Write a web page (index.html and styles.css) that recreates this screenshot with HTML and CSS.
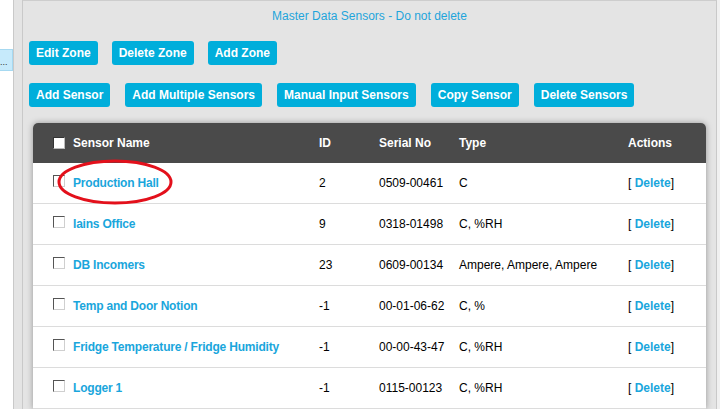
FILE: index.html
```html
<!DOCTYPE html>
<html lang="en">
<head>
    <meta charset="UTF-8">
    <meta name="viewport" content="width=device-width, initial-scale=1.0">
    <title>Master Data Sensors</title>
    <link rel="stylesheet" href="styles.css">
</head>
<body>

<div class="page">
    <aside class="sidebar">
        <div class="zone-item selected">...</div>
    </aside>
    <div class="gutter"></div>

    <main class="content">
        <h2 class="zone-title">Master Data Sensors - Do not delete</h2>

        <div class="button-row">
            <a href="#" class="btn">Edit Zone</a>
            <a href="#" class="btn">Delete Zone</a>
            <a href="#" class="btn">Add Zone</a>
        </div>
        <div class="button-row row-sensors">
            <a href="#" class="btn">Add Sensor</a>
            <a href="#" class="btn">Add Multiple Sensors</a>
            <a href="#" class="btn">Manual Input Sensors</a>
            <a href="#" class="btn">Copy Sensor</a>
            <a href="#" class="btn">Delete Sensors</a>
        </div>

        <div class="table-wrap">
            <table class="sensor-table">
                <colgroup>
                    <col class="col-name">
                    <col class="col-id">
                    <col class="col-serial">
                    <col class="col-type">
                    <col class="col-actions">
                </colgroup>
                <thead>
                    <tr>
                        <th><div class="name-cell"><span class="check check-head"></span>Sensor Name</div></th>
                        <th>ID</th>
                        <th>Serial No</th>
                        <th>Type</th>
                        <th>Actions</th>
                    </tr>
                </thead>
                <tbody id="sensor-rows"></tbody>
            </table>

            <!-- red annotation drawn over the first sensor -->
            <svg class="mark" width="118" height="48" viewBox="0 0 118 48">
                <ellipse cx="58" cy="23" rx="56" ry="21" fill="none" stroke="#e3101b" stroke-width="3"/>
            </svg>
        </div>
    </main>
</div>

<script>
    const sensors = [
        { name: 'Production Hall', id: 2, serial: '0509-00461', type: 'C' },
        { name: 'Iains Office', id: 9, serial: '0318-01498', type: 'C, %RH' },
        { name: 'DB Incomers', id: 23, serial: '0609-00134', type: 'Ampere, Ampere, Ampere' },
        { name: 'Temp and Door Notion', id: -1, serial: '00-01-06-62', type: 'C, %' },
        { name: 'Fridge Temperature / Fridge Humidity', id: -1, serial: '00-00-43-47', type: 'C, %RH' },
        { name: 'Logger 1', id: -1, serial: '0115-00123', type: 'C, %RH' }
    ];

    const tbody = document.getElementById('sensor-rows');

    sensors.forEach(s => {
        const tr = document.createElement('tr');
        tr.innerHTML = `
            <td><div class="name-cell"><span class="check"></span><a href="#" class="sensor-link">${s.name}</a></div></td>
            <td>${s.id}</td>
            <td>${s.serial}</td>
            <td>${s.type}</td>
            <td>[ <a href="#" class="delete-link">Delete</a>]</td>
        `;
        tbody.appendChild(tr);
    });
</script>

</body>
</html>
```

FILE: styles.css
```css
html, body {
    margin: 0;
    padding: 0;
    height: 409px;
    overflow: hidden;
}
body {
    font-family: "Liberation Sans", Arial, sans-serif;
    font-size: 12px;
    color: #000;
    background: #f0f0f0;
}
.page {
    display: flex;
    height: 409px;
    width: 717px;
}
.sidebar {
    width: 13px;
    background: #fff;
    border-right: 1px solid #c9c9c9;
    padding-top: 49px;
    overflow: hidden;
}
.zone-item {
    height: 20px;
    line-height: 24px;
    font-size: 9px;
    color: #333;
    white-space: nowrap;
    overflow: hidden;
}
.zone-item.selected {
    background: #c6eafb;
    border-top: 1px solid #a6d9f1;
    border-bottom: 1px solid #a6d9f1;
    border-right: 1px solid #a6d9f1;
}
.gutter {
    width: 8px;
    background: #e4e4e4;
    border-right: 1px solid #c9c9c9;
}
.content {
    flex: 1;
    background: #e4e4e4;
    border-top: 1px solid #cdcdcd;
    border-right: 1px solid #c9c9c9;
}
.zone-title {
    margin: 8px 0 0;
    font-size: 12px;
    font-weight: normal;
    line-height: 14px;
    text-align: center;
    color: #1fa5db;
}
.button-row {
    display: flex;
    gap: 14px;
    margin: 18px 0 0 6px;
}
.row-sensors {
    gap: 15px;
    margin-top: 18px;
}
.btn {
    display: inline-block;
    height: 24px;
    line-height: 24px;
    padding: 0 7px;
    background: #00aedb;
    color: #fff;
    font-weight: bold;
    text-decoration: none;
    border-radius: 3px;
}
.table-wrap {
    position: relative;
    margin: 16px 10px 0;
    background: #fff;
    border-radius: 5px 5px 0 0;
    box-shadow: 0 0 6px rgba(0, 0, 0, 0.35);
}
.sensor-table {
    width: 100%;
    table-layout: fixed;
    border-collapse: collapse;
}
.col-name { width: 276px; }
.col-id { width: 60px; }
.col-serial { width: 80px; }
.col-type { width: 169px; }
.sensor-table th {
    height: 40px;
    padding: 0 10px;
    background: #4a4a4a;
    color: #fff;
    font-weight: bold;
    text-align: left;
}
.sensor-table th:first-child {
    border-top-left-radius: 5px;
}
.sensor-table th:last-child {
    border-top-right-radius: 5px;
}
.sensor-table td {
    height: 40px;
    padding: 0 10px;
    border-bottom: 1px solid #dcdcdc;
    white-space: nowrap;
}
.sensor-table th:first-child,
.sensor-table td:first-child {
    padding-left: 20px;
}
.name-cell {
    display: flex;
    align-items: center;
}
.check {
    width: 10px;
    height: 10px;
    margin-right: 8px;
    margin-bottom: 5px;
    background: #fff;
    border: 1px solid;
    border-color: #555 #cfcfcf #cfcfcf #555;
}
.check-head {
    margin-bottom: 0;
    border-color: #333 #bbb #bbb #333;
}
.sensor-link,
.delete-link {
    color: #1aa6dc;
    font-weight: bold;
    text-decoration: none;
}
.sensor-link {
    letter-spacing: -0.2px;
}
.mark {
    position: absolute;
    left: 24px;
    top: 36px;
}
```
